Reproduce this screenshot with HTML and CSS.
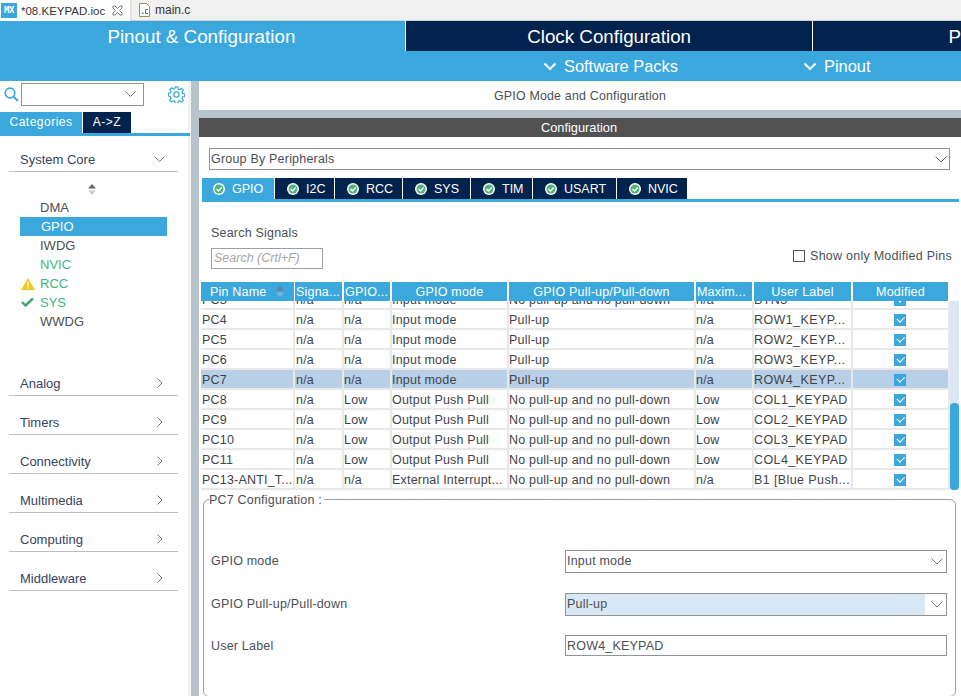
FILE: index.html
```html
<!DOCTYPE html>
<html lang="en">
<head>
<meta charset="utf-8">
<title>08.KEYPAD.ioc</title>
<link rel="stylesheet" href="styles.css">
</head>
<body>
<div class="app">
  <header class="filetabs">
    <div class="filetab active">
      <span class="mx">MX</span><span class="fname">*08.KEYPAD.ioc</span>
      <svg class="closex" width="11" height="11" viewBox="0 0 11 11"><path d="M1 1h2l2.500 2.500L8 1h2v2L7.500 5.500 10 8v2H8L5.500 7.500 3 10H1V8l2.500-2.500L1 3z" fill="none" stroke="#777" stroke-width="1"/></svg>
    </div>
    <div class="filetab">
      <svg class="cfile" width="11" height="14" viewBox="0 0 11 14"><path d="M.5.500h7l3 3v10H.500z" fill="#fff" stroke="#a98a4a"/><path d="M3 9.500h1.500v1.500H3z" fill="#3a6ea5"/><path d="M9 6.500H6.500v4H9" fill="none" stroke="#3a6ea5"/></svg>
      <span class="fname">main.c</span>
    </div>
  </header>

  <nav class="mainnav">
    <div class="mainitem selected">Pinout &amp; Configuration</div>
    <div class="mainitem clock">Clock Configuration</div>
    <div class="mainitem project">P</div>
  </nav>
  <div class="subnav">
    <div class="subitem packs"><svg width="14" height="9" viewBox="0 0 14 9"><path d="M1.500 1.500L7 7l5.500-5.500" fill="none" stroke="#fff" stroke-width="2"/></svg>Software Packs</div>
    <div class="subitem pinout"><svg width="14" height="9" viewBox="0 0 14 9"><path d="M1.500 1.500L7 7l5.500-5.500" fill="none" stroke="#fff" stroke-width="2"/></svg>Pinout</div>
  </div>

  <div class="workspace">
    <aside class="sidebar">
      <div class="searchrow">
        <svg class="lens" width="15" height="15" viewBox="0 0 15 15"><circle cx="6" cy="6" r="4.800" fill="none" stroke="#3aa8dc" stroke-width="1.700"/><path d="M9.500 9.500l4.500 4.500" stroke="#3aa8dc" stroke-width="2"/></svg>
        <div class="searchbox"><svg width="11" height="7" viewBox="0 0 11 7"><path d="M.5.500l5 5 5-5" fill="none" stroke="#777"/></svg></div>
        <svg class="gear" width="17" height="17" viewBox="0 0 18 18"><circle cx="9" cy="9" r="2.800" fill="none" stroke="#3aa8dc" stroke-width="1.300"/><path d="M7.600 1h2.800l.4 2.200 1.500.6 1.900-1.300 2 2-1.300 1.900.6 1.500 2.200.4v2.800l-2.200.4-.6 1.500 1.300 1.900-2 2-1.900-1.300-1.500.6-.4 2.200H7.600l-.4-2.200-1.500-.6-1.900 1.300-2-2 1.300-1.900-.6-1.500L.3 10.400V7.600l2.200-.4.6-1.500-1.300-1.900 2-2 1.900 1.300 1.500-.6z" fill="none" stroke="#3aa8dc" stroke-width="1.300"/></svg>
      </div>
      <div class="sidetabs">
        <span class="sidetab on">Categories</span><span class="sidetab">A-&gt;Z</span>
      </div>
      <div class="cat first"><span>System Core</span><svg width="11" height="6" viewBox="0 0 11 6"><path d="M.5.500l5 5 5-5" fill="none" stroke="#777"/></svg></div>
      <div class="sorter"><svg width="8" height="11" viewBox="0 0 8 11"><path d="M4 0l4 4.500H0z" fill="#666"/><path d="M4 11L0 6.500h8z" fill="#ccc"/></svg></div>
      <ul class="peripherals">
        <li>DMA</li>
        <li class="current">GPIO</li>
        <li>IWDG</li>
        <li class="ok">NVIC</li>
        <li class="ok"><svg class="mark" width="14" height="12" viewBox="0 0 14 12"><path d="M7 0l7 12H0z" fill="#f5c518"/><path d="M6.300 3.500h1.400v5H6.300zM6.300 9.300h1.400v1.400H6.300z" fill="#fff"/></svg>RCC</li>
        <li class="ok"><svg class="mark" width="13" height="10" viewBox="0 0 13 10"><path d="M1 5l3.500 3.500L12 1.500" fill="none" stroke="#3ca66f" stroke-width="2.400"/></svg>SYS</li>
        <li>WWDG</li>
      </ul>
      <div class="cat analog"><span>Analog</span><svg width="6" height="10" viewBox="0 0 6 10"><path d="M.5.500L5 5 .5 9.500" fill="none" stroke="#777"/></svg></div>
      <div class="cat"><span>Timers</span><svg width="6" height="10" viewBox="0 0 6 10"><path d="M.5.500L5 5 .5 9.500" fill="none" stroke="#777"/></svg></div>
      <div class="cat"><span>Connectivity</span><svg width="6" height="10" viewBox="0 0 6 10"><path d="M.5.500L5 5 .5 9.500" fill="none" stroke="#777"/></svg></div>
      <div class="cat"><span>Multimedia</span><svg width="6" height="10" viewBox="0 0 6 10"><path d="M.5.500L5 5 .5 9.500" fill="none" stroke="#777"/></svg></div>
      <div class="cat"><span>Computing</span><svg width="6" height="10" viewBox="0 0 6 10"><path d="M.5.500L5 5 .5 9.500" fill="none" stroke="#777"/></svg></div>
      <div class="cat"><span>Middleware</span><svg width="6" height="10" viewBox="0 0 6 10"><path d="M.5.500L5 5 .5 9.500" fill="none" stroke="#777"/></svg></div>
    </aside>

    <main class="content">
      <div class="modetitle">GPIO Mode and Configuration</div>
      <div class="confbar">Configuration</div>
      <div class="confbody">
        <div class="groupby"><span>Group By Peripherals</span><svg width="12" height="7" viewBox="0 0 12 7"><path d="M.5.500L6 6 11.500.500" fill="none" stroke="#666"/></svg></div>
        <div class="ptabs">
          <div class="ptab on"><svg class="tick" viewBox="0 0 12 12"><circle cx="6" cy="6" r="6" fill="#fff"/><circle cx="6" cy="6" r="4.500" fill="#4fb47a"/><path d="M3.500 6l2 2 3.200-3.500" fill="none" stroke="#fff" stroke-width="1.400"/></svg>GPIO</div>
          <div class="ptab"><svg class="tick" viewBox="0 0 12 12"><circle cx="6" cy="6" r="6" fill="#fff"/><circle cx="6" cy="6" r="4.500" fill="#4fb47a"/><path d="M3.500 6l2 2 3.200-3.500" fill="none" stroke="#fff" stroke-width="1.400"/></svg>I2C</div>
          <div class="ptab"><svg class="tick" viewBox="0 0 12 12"><circle cx="6" cy="6" r="6" fill="#fff"/><circle cx="6" cy="6" r="4.500" fill="#4fb47a"/><path d="M3.500 6l2 2 3.200-3.500" fill="none" stroke="#fff" stroke-width="1.400"/></svg>RCC</div>
          <div class="ptab"><svg class="tick" viewBox="0 0 12 12"><circle cx="6" cy="6" r="6" fill="#fff"/><circle cx="6" cy="6" r="4.500" fill="#4fb47a"/><path d="M3.500 6l2 2 3.200-3.500" fill="none" stroke="#fff" stroke-width="1.400"/></svg>SYS</div>
          <div class="ptab"><svg class="tick" viewBox="0 0 12 12"><circle cx="6" cy="6" r="6" fill="#fff"/><circle cx="6" cy="6" r="4.500" fill="#4fb47a"/><path d="M3.500 6l2 2 3.200-3.500" fill="none" stroke="#fff" stroke-width="1.400"/></svg>TIM</div>
          <div class="ptab"><svg class="tick" viewBox="0 0 12 12"><circle cx="6" cy="6" r="6" fill="#fff"/><circle cx="6" cy="6" r="4.500" fill="#4fb47a"/><path d="M3.500 6l2 2 3.200-3.500" fill="none" stroke="#fff" stroke-width="1.400"/></svg>USART</div>
          <div class="ptab"><svg class="tick" viewBox="0 0 12 12"><circle cx="6" cy="6" r="6" fill="#fff"/><circle cx="6" cy="6" r="4.500" fill="#4fb47a"/><path d="M3.500 6l2 2 3.200-3.500" fill="none" stroke="#fff" stroke-width="1.400"/></svg>NVIC</div>
        </div>
        <div class="searcharea">
          <div class="searchleft">
            <div class="slabel">Search Signals</div>
            <div class="sinput">Search (Crtl+F)</div>
          </div>
          <div class="onlymod"><span class="emptybox"></span>Show only Modified Pins</div>
        </div>
        <div class="pintable">
          <div class="thead">
            <div class="th name">Pin Name<svg width="8" height="11" viewBox="0 0 8 11"><path d="M4 0l4 4.500H0z" fill="#6b7f8c"/><path d="M4 11L0 6.500h8z" fill="#7cb8d8"/></svg></div>
            <div class="th left">Signa...</div><div class="th left">GPIO...</div><div class="th">GPIO mode</div><div class="th">GPIO Pull-up/Pull-down</div><div class="th left">Maxim...</div><div class="th">User Label</div><div class="th">Modified</div>
          </div>
          <div class="tbodywrap">
            <div class="tbody">
              <div class="tr scrolled"><span>PC3</span><span>n/a</span><span>n/a</span><span>Input mode</span><span>No pull-up and no pull-down</span><span>n/a</span><span>BTN3</span><span class="chk"><i class="cb"></i></span></div>
              <div class="tr"><span>PC4</span><span>n/a</span><span>n/a</span><span>Input mode</span><span>Pull-up</span><span>n/a</span><span>ROW1_KEYP...</span><span class="chk"><i class="cb"></i></span></div>
              <div class="tr"><span>PC5</span><span>n/a</span><span>n/a</span><span>Input mode</span><span>Pull-up</span><span>n/a</span><span>ROW2_KEYP...</span><span class="chk"><i class="cb"></i></span></div>
              <div class="tr"><span>PC6</span><span>n/a</span><span>n/a</span><span>Input mode</span><span>Pull-up</span><span>n/a</span><span>ROW3_KEYP...</span><span class="chk"><i class="cb"></i></span></div>
              <div class="tr sel"><span>PC7</span><span>n/a</span><span>n/a</span><span>Input mode</span><span>Pull-up</span><span>n/a</span><span>ROW4_KEYP...</span><span class="chk"><i class="cb"></i></span></div>
              <div class="tr"><span>PC8</span><span>n/a</span><span>Low</span><span>Output Push Pull</span><span>No pull-up and no pull-down</span><span>Low</span><span>COL1_KEYPAD</span><span class="chk"><i class="cb"></i></span></div>
              <div class="tr"><span>PC9</span><span>n/a</span><span>Low</span><span>Output Push Pull</span><span>No pull-up and no pull-down</span><span>Low</span><span>COL2_KEYPAD</span><span class="chk"><i class="cb"></i></span></div>
              <div class="tr"><span>PC10</span><span>n/a</span><span>Low</span><span>Output Push Pull</span><span>No pull-up and no pull-down</span><span>Low</span><span>COL3_KEYPAD</span><span class="chk"><i class="cb"></i></span></div>
              <div class="tr"><span>PC11</span><span>n/a</span><span>Low</span><span>Output Push Pull</span><span>No pull-up and no pull-down</span><span>Low</span><span>COL4_KEYPAD</span><span class="chk"><i class="cb"></i></span></div>
              <div class="tr"><span>PC13-ANTI_T...</span><span>n/a</span><span>n/a</span><span>External Interrupt...</span><span>No pull-up and no pull-down</span><span>n/a</span><span>B1 [Blue Push...</span><span class="chk"><i class="cb"></i></span></div>
            </div>
            <div class="vscroll"><div class="vthumb"></div></div>
          </div>
        </div>
        <fieldset class="pinconf">
          <legend>PC7 Configuration :</legend>
          <div class="frow"><label>GPIO mode</label><div class="fselect"><span class="fval">Input mode</span><span class="farrow"><svg width="12" height="7" viewBox="0 0 12 7"><path d="M.5.500L6 6 11.500.500" fill="none" stroke="#777"/></svg></span></div></div>
          <div class="frow"><label>GPIO Pull-up/Pull-down</label><div class="fselect hl"><span class="fval">Pull-up</span><span class="farrow"><svg width="12" height="7" viewBox="0 0 12 7"><path d="M.5.500L6 6 11.500.500" fill="none" stroke="#777"/></svg></span></div></div>
          <div class="frow last"><label>User Label</label><div class="fselect thin"><span class="fval">ROW4_KEYPAD</span></div></div>
        </fieldset>
      </div>
    </main>
  </div>
</div>
</body>
</html>
```
FILE: styles.css
```css
* { box-sizing: border-box; }
html, body { margin: 0; padding: 0; }
body { font-family: "Liberation Sans", Arial, sans-serif; background: #fff; color: #4a4f55; }
.app { width: 961px; height: 696px; overflow: hidden; display: flex; flex-direction: column; }

/* file tabs */
.filetabs { height: 21px; display: flex; background: #f0f0f0; flex: none; border-bottom: 1px solid #d0d0d0; }
.filetab { display: flex; align-items: center; font-size: 12px; color: #333; height: 21px; }
.filetab.active { width: 130px; background: #fff; font-size: 11.500px; }
.filetab:not(.active) { border-left: 2px solid #e2e2e2; padding-left: 7px; width: 70px; height: 20px; }
.mx { width: 16px; height: 15px; background: #3aa8dc; color: #fff; font: bold 9px/15px "DejaVu Sans Mono", monospace; text-align: center; margin: 0 4px 1px 1px; letter-spacing: -.5px; }
.closex { margin-left: 7px; }
.cfile { margin-right: 5px; }

/* main navigation */
.mainnav { height: 30px; display: flex; background: #02234d; flex: none; }
.mainitem { font-size: 18.800px; color: #fff; line-height: 31px; text-align: center; }
.mainitem.selected { width: 405px; background: #3aa8dc; padding-right: 2px; }
.mainitem.clock { width: 409px; border-left: 1px solid #fff; border-right: 1px solid #fff; }
.mainitem.project { flex: 1; text-align: left; padding-left: 135px; }
.subnav { height: 30px; background: #3aa8dc; flex: none; display: flex; padding-top: 1px; }
.subitem { display: flex; align-items: center; gap: 7px; font-size: 16.400px; color: #fff; }
.subitem.packs { margin-left: 543px; width: 260px; }

/* body */
.workspace { flex: 1; display: flex; min-height: 0; }
.sidebar { width: 191px; flex: none; border-right: 3px solid #eff3f6; background: #fff; }
.searchrow { height: 29px; display: flex; align-items: center; padding: 0 0 2px 4px; }
.lens { margin-right: 2px; }
.searchbox { width: 123px; height: 23px; border: 1px solid #8e9498; display: flex; align-items: center; justify-content: flex-end; padding-right: 7px; }
.gear { margin-left: 24px; }
.sidetabs { height: 26px; display: flex; border-bottom: 3px solid #3aa8dc; padding-top: 2px; margin-right: -2px; }
.sidetab { width: 82px; background: #3aa8dc; color: #fff; font-size: 12px; letter-spacing: .5px; text-align: center; line-height: 21px; }
.sidetab + .sidetab { width: 48px; margin-left: 1px; background: #02234d; }
.cat { margin: 0 10px 0 9px; height: 39px; border-bottom: 1px solid #b8c1c7; display: flex; align-items: flex-end; justify-content: space-between; padding: 0 15px 4px 11px; font-size: 13px; color: #37435f; }
.cat svg { margin-bottom: 3px; }
.cat.first { height: 36px; padding-right: 13px; }
.cat.first svg { margin-bottom: 5px; }
.sorter { height: 26px; margin-left: 88px; padding-top: 12px; display: flex; align-items: flex-start; }
.peripherals { list-style: none; margin: 0 0 0 20px; padding: 0; width: 147px; }
.peripherals li { height: 19px; line-height: 19px; font-size: 13px; padding-left: 20px; color: #4a4f55; display: flex; align-items: center; position: relative; }
.peripherals li.current { background: #3aa8dc; color: #fff; padding-left: 21px; }
.peripherals li.ok { color: #3fb47f; }
.mark { position: absolute; left: 1px; top: 4px; }
.cat.analog { margin-top: 27px; height: 38px; }

.content { flex: 1; border-left: 8px solid #b8c4cb; min-width: 0; display: flex; flex-direction: column; background: #fff; }
.modetitle { height: 29px; flex: none; font-size: 12.400px; text-align: center; line-height: 31px; letter-spacing: .2px; color: #4a4f55; }
.confbar { height: 27px; flex: none; border-top: 8px solid #b8c4cb; background: #505150; color: #fff; font-size: 12.800px; text-align: center; line-height: 20px; padding-right: 2px; }
.confbody { flex: 1; min-height: 0; padding: 11px 0 0 2px; }
.groupby { margin: 0 11px 0 8px; height: 22px; border: 1px solid #8e9498; display: flex; align-items: center; justify-content: space-between; padding: 0 2px 0 1px; font-size: 12.500px; letter-spacing: .2px; }
.ptabs { display: grid; grid-template-columns: 72px 59px 67px 67px 61px 83px 70px; justify-content: start; gap: 1px; margin: 8px 2px 0 1px; height: 24px; border-bottom: 3px solid #3aa8dc; }
.ptab { height: 21px; background: #02234d; color: #fff; font-size: 12.500px; display: flex; align-items: center; gap: 7px; padding-left: 12px; }
.ptab.on { background: #3aa8dc; padding-left: 11px; }
.tick { width: 12px; height: 12px; flex: none; }
.searcharea { height: 80px; display: flex; justify-content: space-between; align-items: flex-start; padding: 23px 9px 0 10px; }
.slabel { font-size: 12.500px; line-height: 16px; letter-spacing: .2px; }
.sinput { margin-top: 7px; width: 112px; height: 21px; border: 1px solid #9a9fa3; font-size: 12.500px; font-style: italic; color: #a6a6a6; line-height: 19px; padding-left: 2px; }
.onlymod { display: flex; align-items: center; font-size: 12.500px; margin-top: 24px; gap: 5px; letter-spacing: .25px; }
.emptybox { width: 12px; height: 12px; border: 1px solid #555; }
.pintable { width: 758px; }
.thead, .tr { display: grid; grid-template-columns: 94px 49px 48px 117px 187px 58px 99px 97px; width: 749px; }
.thead { height: 19px; }
.th { background: #3aa8dc; border-right: 2px solid #fff; color: #fff; font-size: 12.500px; line-height: 20px; text-align: center; letter-spacing: .2px; white-space: nowrap; overflow: hidden; }
.th.left { text-align: left; padding-left: 1px; }
.th.name { display: flex; align-items: center; justify-content: space-between; padding: 0 10px 0 9px; border-right-width: 1px; }
.tbodywrap { display: flex; height: 189px; overflow: hidden; }
.tbody { width: 749px; flex: none; }
.tr { height: 20px; font-size: 12.500px; letter-spacing: .2px; color: #3f4347; border-bottom: 2px solid #e8e8e8; }
.tr.scrolled { margin-top: -11px; }
.tr > span { padding-left: 1px; border-right: 2px solid #e8e8e8; line-height: 20px; white-space: nowrap; overflow: hidden; }
.tr > span:nth-child(n+3) { padding-left: 0; }
.tr > span:nth-child(7) { letter-spacing: .4px; }
.tr.sel { background: #b8cfe8; }
.tr > span.chk { display: flex; align-items: center; justify-content: center; padding: 1px 2px 0 0; }
.cb { width: 12px; height: 12px; background: #3aa8dc; position: relative; display: block; }
.cb::after { content: ""; position: absolute; left: 3px; top: 2px; width: 6px; height: 3.500px; border-left: 1.500px solid #fff; border-bottom: 1.500px solid #fff; transform: rotate(-45deg); }
.vscroll { width: 9px; background: #dbe8f3; flex: none; display: flex; align-items: flex-end; }
.vthumb { width: 100%; height: 87px; background: #3aa8dc; border-radius: 4px; }

.pinconf { margin: 1px 5px 0 2px; padding: 43px 0 0 7px; height: 206px; border: 1px solid #9a9fa3; border-radius: 6px; min-width: 0; }
.pinconf legend { font-size: 12.500px; padding: 2px 2px 0 0; margin-left: -2px; letter-spacing: .2px; line-height: 14px; }
.frow { height: 43px; display: flex; align-items: flex-start; }
.frow.last { margin-top: -1px; }
.frow label { width: 354px; font-size: 12.500px; line-height: 23px; letter-spacing: .2px; flex: none; }
.fselect { width: 382px; height: 23px; border: 1px solid #8e9498; display: flex; font-size: 12.500px; letter-spacing: .2px; line-height: 21px; }
.fselect.thin { height: 21px; line-height: 20px; }
.fval { flex: 1; padding-left: 1px; }
.fselect.hl .fval { background: #d9e8f5; }
.farrow { width: 21px; display: flex; align-items: center; justify-content: center; padding-left: 2px; }
```
